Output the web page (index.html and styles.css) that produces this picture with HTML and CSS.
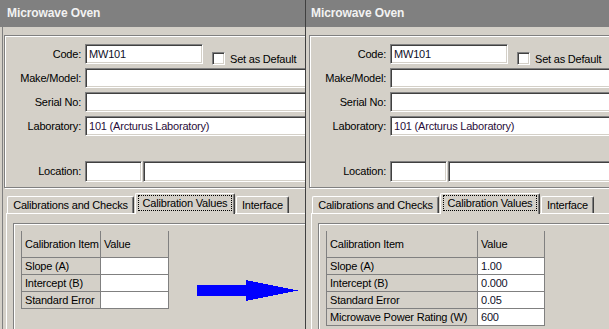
FILE: index.html
```html
<!DOCTYPE html>
<html lang="en">
<head>
  <meta charset="UTF-8" />
  <title>Microwave Oven - Calibration Values</title>
  <link rel="stylesheet" href="styles.css">
</head>
<body>
  <div class="screen">

    <!-- before: empty values -->
    <div class="window">
      <div class="titlebar">Microwave Oven</div>
      <div class="frame">
        <div class="group">
          <div class="row">
            <label class="caption">Code:</label>
            <div class="field code">MW101</div>
            <div class="check"><span class="box"></span>Set as Default</div>
          </div>
          <div class="row">
            <label class="caption">Make/Model:</label>
            <div class="field wide"></div>
          </div>
          <div class="row">
            <label class="caption">Serial No:</label>
            <div class="field wide"></div>
          </div>
          <div class="row">
            <label class="caption">Laboratory:</label>
            <div class="field wide lab">101 (Arcturus Laboratory)</div>
          </div>
          <div class="row location">
            <label class="caption">Location:</label>
            <div class="field short"></div>
            <div class="field wide"></div>
          </div>
        </div>

        <div class="tab-strip">
          <div class="tab tab-checks">Calibrations and Checks</div>
          <div class="tab tab-values active"><span class="focus">Calibration Values</span></div>
          <div class="tab tab-interface">Interface</div>
        </div>
        <div class="tab-panel">
          <div class="inner">
            <div class="grid small">
              <div class="cell head">Calibration Item</div>
              <div class="cell head">Value</div>
              <div class="cell">Slope (A)</div>
              <div class="cell value"></div>
              <div class="cell">Intercept (B)</div>
              <div class="cell value"></div>
              <div class="cell">Standard Error</div>
              <div class="cell value"></div>
            </div>
          </div>
        </div>
      </div>
    </div>

    <!-- after: values filled in -->
    <div class="window second">
      <div class="titlebar">Microwave Oven</div>
      <div class="frame">
        <div class="group">
          <div class="row">
            <label class="caption">Code:</label>
            <div class="field code">MW101</div>
            <div class="check"><span class="box"></span>Set as Default</div>
          </div>
          <div class="row">
            <label class="caption">Make/Model:</label>
            <div class="field wide"></div>
          </div>
          <div class="row">
            <label class="caption">Serial No:</label>
            <div class="field wide"></div>
          </div>
          <div class="row">
            <label class="caption">Laboratory:</label>
            <div class="field wide lab">101 (Arcturus Laboratory)</div>
          </div>
          <div class="row location">
            <label class="caption">Location:</label>
            <div class="field short"></div>
            <div class="field wide"></div>
          </div>
        </div>

        <div class="tab-strip">
          <div class="tab tab-checks">Calibrations and Checks</div>
          <div class="tab tab-values active"><span class="focus">Calibration Values</span></div>
          <div class="tab tab-interface">Interface</div>
        </div>
        <div class="tab-panel">
          <div class="inner">
            <div class="grid large">
              <div class="cell head">Calibration Item</div>
              <div class="cell head">Value</div>
              <div class="cell">Slope (A)</div>
              <div class="cell value">1.00</div>
              <div class="cell">Intercept (B)</div>
              <div class="cell value">0.000</div>
              <div class="cell">Standard Error</div>
              <div class="cell value">0.05</div>
              <div class="cell">Microwave Power Rating (W)</div>
              <div class="cell value">600</div>
            </div>
          </div>
        </div>
      </div>
    </div>

    <svg class="arrow" width="101" height="22" viewBox="0 0 101 22" shape-rendering="crispEdges">
      <polygon points="0,5 49,5 49,0 101,10.5 49,21 49,16 0,16" fill="#0000ff" />
    </svg>
  </div>
</body>
</html>
```

FILE: styles.css
```css
* {
  box-sizing: border-box;
}

body {
  margin: 0;
  background-color: #d4d0c8;
  font-family: 'Liberation Sans', Arial, sans-serif;
  font-size: 11px;
  letter-spacing: -0.2px;
  color: #000;
}

.screen {
  display: flex;
  width: 609px;
  height: 329px;
  overflow: hidden;
  position: relative;
}

.window {
  width: 305px;
  height: 329px;
  flex: none;
  overflow: hidden;
}

.window.second {
  width: 304px;
  border-left: 1px solid #404040;
}

.titlebar {
  height: 27px;
  background-color: #808080;
  color: #f2f2f2;
  font-size: 12px;
  font-weight: bold;
  letter-spacing: -0.1px;
  line-height: 27px;
  padding-left: 7px;
  white-space: nowrap;
}

.second .titlebar {
  padding-left: 5px;
}

.frame {
  width: 700px;
  height: 302px;
  margin-left: 2px;
  border-left: 1px solid #808080;
  padding-top: 8px;
}

.second .frame {
  margin-left: 0;
  border-left: none;
  padding-left: 2px;
}

/* etched group box */
.group {
  height: 153px;
  margin-left: 1px;
  border: 1px solid #808080;
  box-shadow: inset 1px 1px 0 #fff, 1px 1px 0 #fff;
  padding: 8px 0 0 1px;
  display: flex;
  flex-direction: column;
  gap: 4px;
}

.row {
  display: flex;
  align-items: flex-start;
  height: 20px;
}

.row.location {
  margin-top: 21px;
  height: 21px;
}

.caption {
  width: 75px;
  margin-right: 4px;
  text-align: right;
  line-height: 20px;
  white-space: nowrap;
}

.field {
  height: 20px;
  background: #fff;
  border-style: solid;
  border-width: 1px;
  border-color: #808080 #fff #fff #808080;
  box-shadow: inset 1px 1px 0 #404040, inset -1px -1px 0 #d4d0c8;
  padding-left: 3px;
  line-height: 18px;
  color: #101028;
  white-space: nowrap;
}

.location .field {
  height: 21px;
}

.field.code {
  width: 118px;
}

.field.wide {
  width: 400px;
}

.field.short {
  width: 57px;
  margin-right: 1px;
}

.field.lab {
  color: #2a0d3a;
}

.check {
  display: flex;
  align-items: center;
  margin: 8px 0 0 9px;
  height: 13px;
  white-space: nowrap;
}

.check .box {
  width: 13px;
  height: 13px;
  margin-right: 5px;
  background: #fff;
  border-style: solid;
  border-width: 1px;
  border-color: #808080 #fff #fff #808080;
  box-shadow: inset 1px 1px 0 #404040, inset -1px -1px 0 #d4d0c8;
}

/* tabs */
.tab-strip {
  display: flex;
  align-items: flex-end;
  height: 20px;
  margin-top: 5px;
  padding-left: 4px;
}

.tab {
  height: 17px;
  border-top: 1px solid #fff;
  border-left: 1px solid #fff;
  border-right: 1px solid #404040;
  box-shadow: inset -1px 0 0 #808080;
  border-radius: 2px 2px 0 0;
  line-height: 16px;
  text-align: center;
  white-space: nowrap;
}

.tab-checks {
  width: 127px;
}

.tab-values {
  width: 100px;
  margin-left: 1px;
}

.tab-interface {
  width: 53px;
  margin-left: 1px;
}

.tab.active {
  height: 21px;
  margin-bottom: -1px;
  position: relative;
  z-index: 1;
  background-color: #d4d0c8;
  padding-top: 1px;
}

.focus {
  display: inline-block;
  border: 1px dotted #000;
  padding: 0 4px;
  line-height: 14px;
}

.tab-panel {
  height: 120px;
  margin-left: 3px;
  border-top: 1px solid #fff;
  border-left: 1px solid #fff;
  padding: 9px 0 0 6px;
}

.inner {
  height: 120px;
  border: 1px solid #808080;
  box-shadow: inset 1px 1px 0 #fff, 1px 1px 0 #fff;
  padding: 7px 0 0 7px;
}

/* calibration grid */
.grid {
  display: grid;
  border-left: 1px solid #808080;
  width: max-content;
}

.grid.small {
  grid-template-columns: 79px 68px;
}

.grid.large {
  grid-template-columns: 151px 67px;
}

.cell {
  height: 17px;
  line-height: 16px;
  padding-left: 3px;
  border-right: 1px solid #808080;
  border-bottom: 1px solid #808080;
  white-space: nowrap;
}

.cell.head {
  height: 27px;
  line-height: 26px;
}

.cell.value {
  background-color: #fff;
  color: #101028;
}

.arrow {
  position: absolute;
  left: 197px;
  top: 280px;
}
```
